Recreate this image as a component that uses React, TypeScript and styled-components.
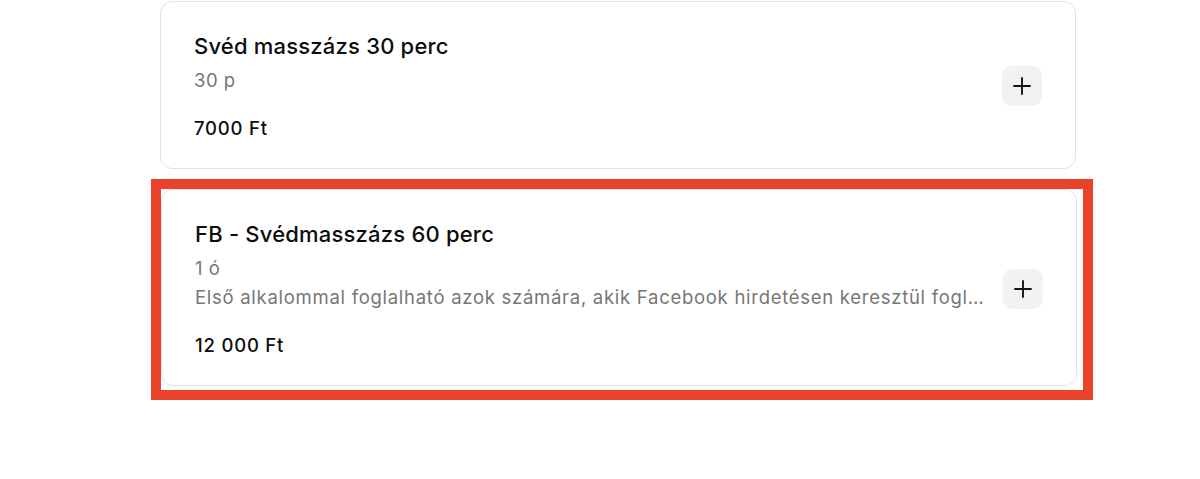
import styled, { createGlobalStyle } from "styled-components";

const GlobalStyle = createGlobalStyle`
  html, body {
    margin: 0;
    padding: 0;
    background: #ffffff;
  }
  body {
    font-family: Inter, "Noto Sans", "Liberation Sans", sans-serif;
    color: #0d0d0d;
    -webkit-font-smoothing: antialiased;
  }
`;

const Services = styled.ul`
  list-style: none;
  margin: 1px 0 0 160px;
  padding: 0 0 40px;
  width: 916px;
  display: flex;
  flex-direction: column;
  align-items: flex-start;
  gap: 20px;
`;

// the highlighted row gets a thick red frame drawn around it
const Item = styled.li<{ $highlighted?: boolean }>`
  width: 916px;
  ${({ $highlighted }) =>
    $highlighted &&
    `
    margin: -10px 0 0 -9px;
    padding: 0 6px 4px 0;
    border: 10px solid #e9432b;
  `}
`;

const Card = styled.div`
  display: flex;
  align-items: center;
  gap: 16px;
  box-sizing: border-box;
  width: 916px;
  border: 1px solid #e3e3e3;
  border-radius: 12px;
  background: #ffffff;
  padding: 30px 33px 28px 33px;
`;

const Info = styled.div`
  flex: 1;
  min-width: 0;
  display: flex;
  flex-direction: column;
`;

const Title = styled.div`
  font-size: 22px;
  line-height: 28px;
  font-weight: 500;
  letter-spacing: 0.2px;
  color: #0d0d0d;
`;

const Meta = styled.div`
  margin-top: 8px;
  font-size: 18.5px;
  line-height: 24px;
  letter-spacing: 0.5px;
  color: #767676;
  white-space: nowrap;
  overflow: hidden;
  text-overflow: ellipsis;
`;

const Description = styled(Meta)`
  margin-top: 5px;
  letter-spacing: 0.72px;
`;

const Price = styled.div`
  margin-top: 24px;
  font-size: 18.5px;
  line-height: 24px;
  font-weight: 500;
  letter-spacing: 0.8px;
  color: #0d0d0d;
`;

const AddButton = styled.button`
  flex: none;
  width: 40px;
  height: 40px;
  border: none;
  border-radius: 9px;
  background: #f2f2f2;
  display: flex;
  align-items: center;
  justify-content: center;
  padding: 0;
  color: #141414;
  cursor: pointer;
`;

type Service = {
  name: string;
  duration: string;
  description?: string;
  price: string;
  highlighted?: boolean;
};

const services: Service[] = [
  { name: "Svéd masszázs 30 perc", duration: "30 p", price: "7000 Ft" },
  {
    name: "FB - Svédmasszázs 60 perc",
    duration: "1 ó",
    description:
      "Első alkalommal foglalható azok számára, akik Facebook hirdetésen keresztül foglalnak időpontot.",
    price: "12 000 Ft",
    highlighted: true,
  },
];

function PlusIcon() {
  return (
    <svg width="18" height="18" viewBox="0 0 18 18" fill="none">
      <path
        d="M9 1v16M1 9h16"
        stroke="currentColor"
        strokeWidth="1.9"
        strokeLinecap="round"
      />
    </svg>
  );
}

export default function App() {
  return (
    <>
      <GlobalStyle />
      <Services>
        {services.map((service) => (
          <Item key={service.name} $highlighted={service.highlighted}>
            <Card>
              <Info>
                <Title>{service.name}</Title>
                <Meta>{service.duration}</Meta>
                {service.description && (
                  <Description title={service.description}>
                    {service.description}
                  </Description>
                )}
                <Price>{service.price}</Price>
              </Info>
              <AddButton aria-label="Hozzáadás">
                <PlusIcon />
              </AddButton>
            </Card>
          </Item>
        ))}
      </Services>
    </>
  );
}
